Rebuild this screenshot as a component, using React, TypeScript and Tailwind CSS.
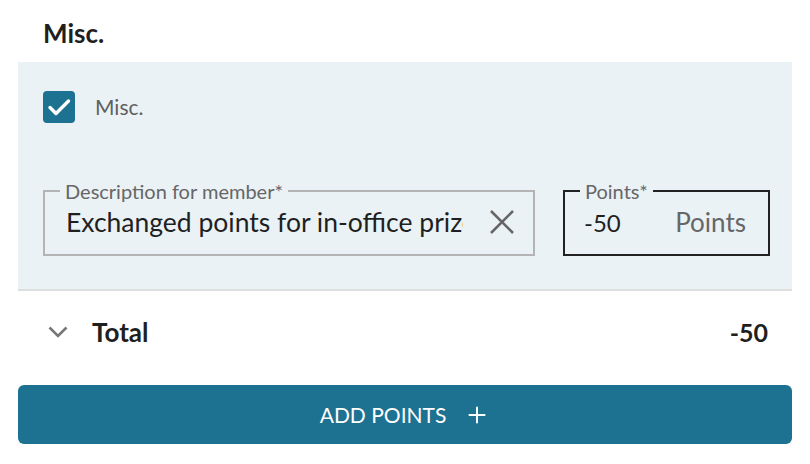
import { Plus } from 'lucide-react';

export default function App() {
    return (
        <div className="h-[464px] w-[810px] bg-white font-['Lato','Liberation_Sans',sans-serif] text-[#1f1f1f]">
            {/* Section title */}
            <div className="px-[43px] pt-[18px] pb-[14px] text-[26px] font-bold leading-[30px]">Misc.</div>

            {/* Category panel */}
            <div className="mx-[18px] border-b-2 border-[#dedede] bg-[#eaf2f6] pt-[29px] pr-[23px] pb-[33px] pl-[25px]">
                <label className="flex items-center gap-[20px]">
                    <span className="flex h-[32px] w-[32px] items-center justify-center rounded-[4px] bg-[#1d7191]">
                        <svg width="32" height="32" viewBox="0 0 32 32" fill="none">
                            <path d="M7 16.5l6 6L25.5 10" stroke="white" strokeWidth="3.4" strokeLinecap="round" strokeLinejoin="round" />
                        </svg>
                    </span>
                    <span className="text-[21px] text-[#5f5f5f]">Misc.</span>
                </label>

                <div className="mt-[58px] flex items-start gap-[28px]">
                    <fieldset className="w-[492px] min-w-0 shrink-0 border-2 border-[#b4b4b4] pr-[18px] pl-[21px]">
                        <legend className="-ml-[6px] px-[5px] text-[20px] leading-[20px] text-[#666]">Description for member*</legend>
                        <div className="flex h-[53px] items-center gap-[26px] pb-[12px]">
                            <span className="min-w-0 flex-1 overflow-hidden whitespace-nowrap text-[26.5px] leading-[32px]">Exchanged points for in-office prize</span>
                            <svg width="26" height="26" viewBox="0 0 26 26" className="shrink-0" fill="none">
                                <path d="M2 2l22 22M24 2L2 24" stroke="#666" strokeWidth="2.6" />
                            </svg>
                        </div>
                    </fieldset>

                    <fieldset className="w-[207px] min-w-0 shrink-0 border-2 border-[#222] pr-[22px] pl-[19px]">
                        <legend className="-ml-[4px] px-[5px] text-[20px] leading-[20px] text-[#666]">Points*</legend>
                        <div className="flex h-[53px] items-center justify-between pb-[10px]">
                            <span className="text-[24px]">-50</span>
                            <span className="text-[26px] text-[#666]">Points</span>
                        </div>
                    </fieldset>
                </div>
            </div>

            {/* Total row */}
            <div className="flex items-center justify-between pt-[26px] pr-[42px] pb-[38px] pl-[48px]">
                <div className="flex items-center gap-[24px]">
                    <svg width="20" height="12" viewBox="0 0 20 12" fill="none">
                        <path d="M1.5 1.5L10 10l8.5-8.5" stroke="#777" strokeWidth="2.6" />
                    </svg>
                    <span className="text-[26px] font-bold leading-[30px]">Total</span>
                </div>
                <span className="text-[25px] font-bold leading-[30px]">-50</span>
            </div>

            {/* Submit */}
            <div className="px-[18px]">
                <button className="flex h-[59px] w-full items-center justify-center gap-[18px] rounded-[6px] bg-[#1d7191] text-[21px] text-white">
                    ADD POINTS
                    <Plus className="h-[26px] w-[26px]" strokeWidth={1.8} />
                </button>
            </div>
        </div>
    );
}
